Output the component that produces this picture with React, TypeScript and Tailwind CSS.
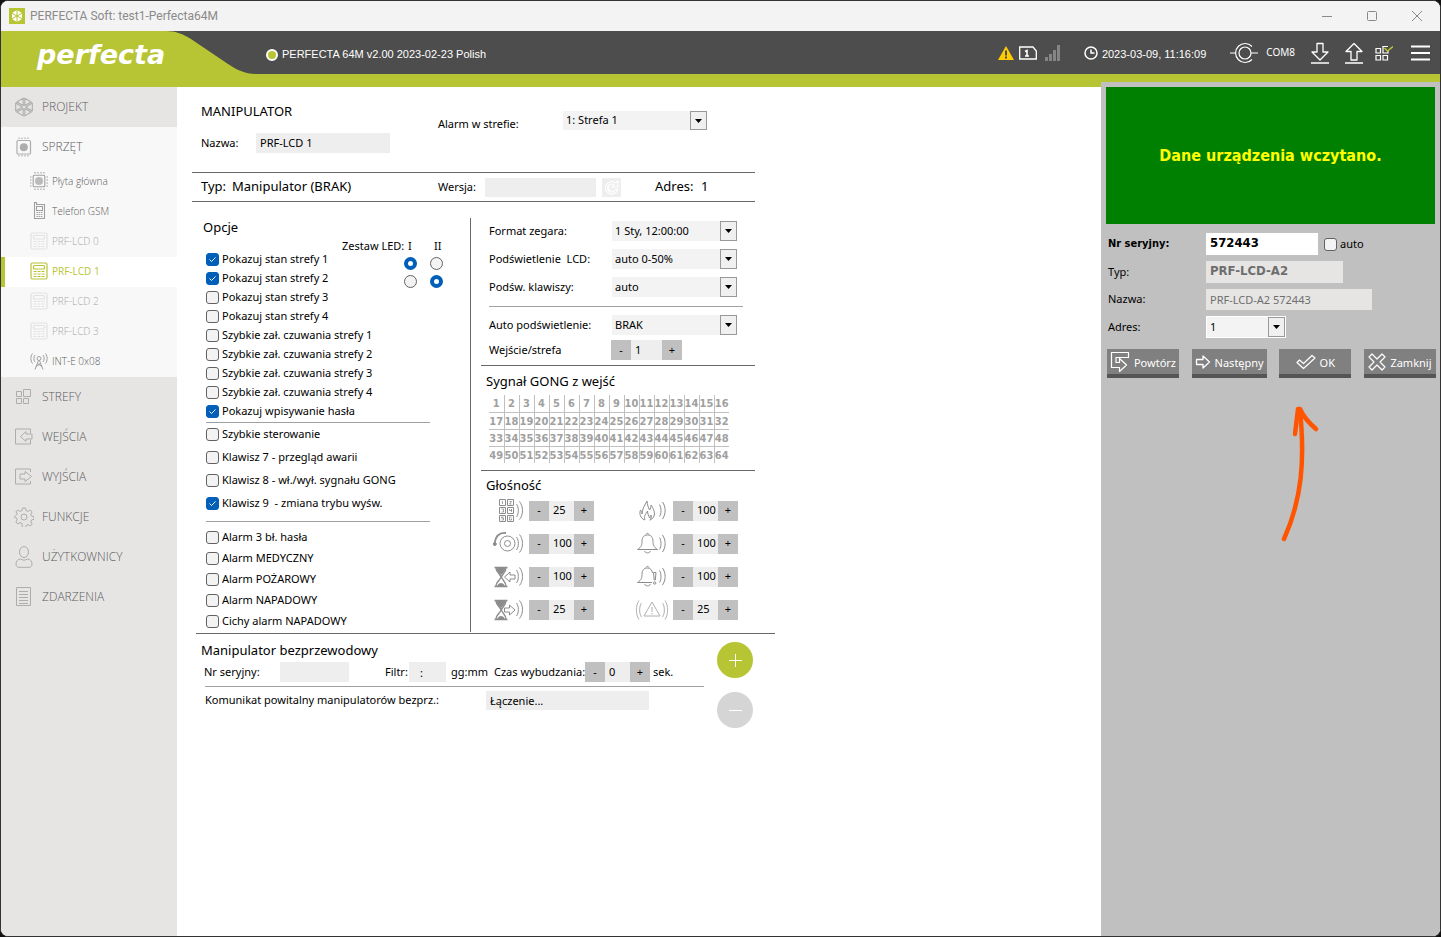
import type { ReactNode } from "react";
import clsx from "clsx";

const UI = "font-['Noto_Sans','Open_Sans',sans-serif]";
const BOLD = "font-['DejaVu_Sans_Condensed','DejaVu_Sans',sans-serif] font-bold";

/* ---------- icons ---------- */

function Svg({
  w,
  h,
  sw = 1,
  className,
  children,
}: {
  w: number;
  h: number;
  sw?: number;
  className?: string;
  children: ReactNode;
}) {
  return (
    <svg
      width={w}
      height={h}
      viewBox={`0 0 ${w} ${h}`}
      fill="none"
      stroke="currentColor"
      strokeWidth={sw}
      className={clsx("shrink-0", className)}
      aria-hidden="true"
    >
      {children}
    </svg>
  );
}

const HexIcon = () => (
  <Svg w={20} h={22} sw={1.1}>
    <path
      d="M10.800 9.500V2.100L17.200 6zM11.600 11l6.700-3.900v7.800zM10.800 12.500V19.900L17.200 16zM9.200 9.500V2.100L2.800 6zM8.400 11L1.700 7.100v7.800zM9.200 12.500V19.900L2.800 16z"
      strokeLinejoin="round"
    />
  </Svg>
);

const ChipIcon = () => (
  <Svg w={16} h={20} sw={1.2}>
    <rect x="1" y="3.5" width="13.5" height="13.5" rx="1" />
    <circle cx="7.8" cy="10.2" r="4" fill="currentColor" stroke="none" />
    <path d="M3 .5v1.5M6 .5v1.5M9 .5v1.5M12 .5v1.5M3 18v1.5M6 18v1.5M9 18v1.5M12 18v1.5" />
  </Svg>
);

const BoardIcon = () => (
  <Svg w={18} h={18} sw={1.1}>
    <rect x="3.2" y="3.2" width="11.6" height="11.6" rx="1" />
    <circle cx="9" cy="9" r="4" fill="currentColor" fillOpacity=".7" stroke="none" />
    <path d="M5 0v1.500M8 0v1.500M11 0v1.500M14 0v1.500M5 16.500v1.500M8 16.500v1.500M11 16.500v1.500M14 16.500v1.500M0 5h1.500M0 8h1.500M0 11h1.500M0 14h1.500M16.500 5h1.500M16.500 8h1.500M16.500 11h1.500M16.500 14h1.500" />
  </Svg>
);

const PhoneIcon = () => (
  <Svg w={18} h={18} sw={1.1}>
    <path d="M4.500.500v16h10V2.500h-8v-2z" />
    <path d="M6.500 4.500h6v4h-6z" />
    <path d="M6.500 10.500h6M6.500 12.500h6M6.500 14.500h6" strokeDasharray="1.500 .7" />
  </Svg>
);

const KeypadIcon = () => (
  <Svg w={18} h={18} sw={1.2}>
    <rect x="1" y="1" width="16" height="16" rx="1.500" />
    <rect x="3.500" y="3.500" width="11" height="3.500" rx="1" />
    <path d="M3.500 9.500h11M3.500 12h11M3.500 14.500h11" strokeDasharray="3 1" />
  </Svg>
);

const AntennaIcon = () => (
  <Svg w={20} h={18}>
    <circle cx="10" cy="6.500" r="2" />
    <path d="M9.500 8.500L6 17.500M10.500 8.500L14 17.500M8.500 11.500l4.500 3M11.500 11.500L7 14.500M6 10c-1.500-2-1.500-5 0-7M14 10c1.500-2 1.500-5 0-7M3.500 11.500c-2.200-3-2.200-7 0-10M16.500 11.500c2.200-3 2.200-7 0-10" />
  </Svg>
);

const ZonesIcon = () => (
  <Svg w={16} h={16}>
    <path d="M.500 2.500h5v5h-5zM7.500.500h7v7h-7zM.500 9.500h5v5h-5zM7.500 9.500h5v5h-5z" />
  </Svg>
);

const InputsIcon = () => (
  <Svg w={18} h={18}>
    <path d="M15.500 5V1H.500v15h15v-4" />
    <path d="M11 3.500L5.500 8.500l5.500 5V11h6V6h-6z" />
  </Svg>
);

const OutputsIcon = () => (
  <Svg w={18} h={18}>
    <path d="M15.500 4V1H.500v15h15v-3" />
    <path d="M10 3.500V6H5v5h5v2.500l6.500-5z" />
  </Svg>
);

const GearIcon = () => (
  <Svg w={20} h={20}>
    <circle cx="10" cy="10" r="3" />
    <path
      d="M8.500 1h3l.5 2.500 2 .9 2.200-1.400 2 2-1.400 2.200.8 1.900 2.400.5v2.800l-2.400.5-.8 2 1.400 2.100-2 2-2.200-1.400-2 .9-.5 2.500h-3L8 16.500l-2-.9L3.800 17l-2-2 1.400-2.100-.8-2L.5 10.400V9.600l1.900-1.500.8-1.900L1.800 5l2-2L6 4.400l2-.9z"
      strokeLinejoin="round"
    />
  </Svg>
);

const UserIcon = () => (
  <Svg w={18} h={22}>
    <ellipse cx="9" cy="6" rx="4.500" ry="5.500" />
    <path d="M5.500 13C2.500 13.500 1 15 1 18c0 2 1.200 3.300 3 3.300h10c1.800 0 3-1.300 3-3.300 0-3-1.500-4.500-4.500-5-2 1.500-5 1.500-7 0z" />
  </Svg>
);

const EventsIcon = () => (
  <Svg w={16} h={20}>
    <path d="M.500.500h14v18H.500zM3 4.500h9M3 7.500h9M3 10.500h9M3 13.500h9M3 16.500h9" />
  </Svg>
);

/* sound waves leaving the right side of each volume glyph */
const Waves = () => <path d="M24.500 6c2.500 3.500 2.500 9.500 0 13M27.500 3.500c4 5 4 13 0 18" />;

const VolKeypad = () => (
  <Svg w={32} h={26}>
    <path d="M7.500 1.500h6v6h-6zM15.500 1.500h6v6h-6zM7.500 9.500h6v6h-6zM15.500 9.500h6v6h-6zM7.500 17.500h6v6h-6zM15.500 17.500h6v6h-6z" />
    <path
      d="M10.500 3v3M17.500 3.500h2l-2 2.500h2M9.500 11h2v3h-2M17.500 11v1.500h2V11v3M11.500 19h-2v1h2v2h-2M19.500 19h-2v3h2v-1.500"
      strokeWidth=".8"
    />
    <Waves />
  </Svg>
);

const VolSiren = () => (
  <Svg w={32} h={26}>
    <circle cx="15.500" cy="12.500" r="7.500" />
    <circle cx="15.500" cy="12.500" r="3" />
    <path d="M2.500 12.500C3.500 5 8 1.500 14 2" strokeWidth="1.800" />
    <circle cx="2.800" cy="13" r="1.500" fill="currentColor" />
    <Waves />
  </Svg>
);

const Hourglass = () => (
  <>
    <path
      d="M2.500 3.500h13M2.500 22.500h13M4 4c0 4 5 7 5 9s-5 5-5 9M14 4c0 4-4.500 7-4.500 9s4.500 5 4.500 9"
      strokeWidth="1.300"
    />
    <path
      d="M4.500 4h9c0 3-3.500 6-4.500 7.500C8 10 4.500 7 4.500 4zM5 22c1-2 2.500-3 4-3s3 1 4 3z"
      fill="currentColor"
      stroke="none"
    />
  </>
);

const VolEntry = () => (
  <Svg w={32} h={26}>
    <Hourglass />
    <path d="M12.500 13l5.500-5v3h5v4h-5v3z" />
    <Waves />
  </Svg>
);

const VolExit = () => (
  <Svg w={32} h={26}>
    <Hourglass />
    <path d="M23 13l-5.500-5v3h-5v4h5v3z" />
    <Waves />
  </Svg>
);

const VolFire = () => (
  <Svg w={32} h={26}>
    <path d="M8.500 22c-4-2-5.500-6-4-10 1 1 1.500 2 1.500 4C6 11 9 7 11 3c.5 4 1 6 2.500 9 1-1 1.500-3 1.500-5 2 3 3.500 6 3.500 9-.5 3-2 5-4.500 6" />
    <path d="M9 22c-1.500-3 .5-6 2.500-9 0 3 1.500 5 2 7l1.500-3c1 2 0 4-1.500 5" />
    <path d="M23.500 6.500c2 3.500 2 9 0 12M26.500 4c3.500 5 3.500 12 0 17" />
  </Svg>
);

const VolBell = () => (
  <Svg w={32} h={26}>
    <path d="M1.500 18.500c4-2.500 4.500-5 4.500-8C6 6 8 4 11.500 4S17 6 17 10.500c0 3 .5 5.500 4.500 8zM10 3.500c.5-1.500 2.500-1.500 3 0M8.500 20c1 2.500 5 2.500 6 0" />
    <path d="M23.500 6.500c2 3.500 2 9 0 12M26.500 4c3.500 5 3.500 12 0 17" />
  </Svg>
);

const VolBellAlert = () => (
  <Svg w={32} h={26}>
    <path d="M16 18.500H1.500c4-2.500 4.500-5 4.500-8C6 6 8 4 11.500 4c3 0 4.500 2 5 5M10 3.500c.5-1.500 2.500-1.500 3 0M8.500 20c1 2.500 5 2.500 6 0" />
    <path d="M17.500 8.500h2.500l-.7 7.500h-1.100z" />
    <circle cx="18.700" cy="19" r="1.200" />
    <path d="M23.500 6.500c2 3.500 2 9 0 12M26.500 4c3.500 5 3.500 12 0 17" />
  </Svg>
);

const VolAlarm = () => (
  <Svg w={32} h={26} className="text-[#b0b0b0]">
    <path d="M16 5l8 14H8zM16 10v5M16 16v1.500" />
    <path d="M5.500 6c-2.500 3.500-2.500 10.500 0 14M3 3.500c-3.500 5-3.500 14 0 19M26.500 6c2.500 3.500 2.500 10.500 0 14M29 3.500c3.500 5 3.500 14 0 19" />
  </Svg>
);

/* ---------- form controls ---------- */

function Check({ label, on, className }: { label: string; on?: boolean; className?: string }) {
  return (
    <label className={clsx("flex items-center gap-[3px] whitespace-pre text-[11px]", className)}>
      <span className="grid size-[13px] shrink-0">
        <input
          type="checkbox"
          defaultChecked={on}
          className="peer col-start-1 row-start-1 size-[13px] appearance-none rounded-[3px] border border-[#626262] bg-[#f3f3f3] checked:border-[#005fb8] checked:bg-[#005fb8]"
        />
        <svg
          viewBox="0 0 13 13"
          className="pointer-events-none invisible col-start-1 row-start-1 size-[13px] peer-checked:visible"
          fill="none"
          stroke="#fff"
        >
          <path d="M3.500 6.500l2 2 4-4" />
        </svg>
      </span>
      {label}
    </label>
  );
}

function Radio({ name, label, on }: { name: string; label: string; on?: boolean }) {
  return (
    <input
      type="radio"
      name={name}
      aria-label={label}
      defaultChecked={on}
      className="size-[13px] appearance-none rounded-full border border-[#626262] bg-[#f3f3f3] checked:border-4 checked:border-[#005fb8] checked:bg-white"
    />
  );
}

function Dropdown({ id, value, className }: { id: string; value: string; className?: string }) {
  return (
    <div className={clsx("relative bg-[#f3f3f3]", className)}>
      <select id={id} className="block h-full w-full appearance-none bg-transparent pl-[3px] text-[11px] outline-none">
        <option>{value}</option>
      </select>
      <span className="pointer-events-none absolute inset-y-0 right-0 flex w-[17px] items-center justify-center border border-[#999] bg-[#f0f0f0]">
        <svg width="7" height="4" viewBox="0 0 7 4">
          <path d="M0 0h7L3.500 4z" />
        </svg>
      </span>
    </div>
  );
}

function Stepper({ label, value, wide }: { label: string; value: string; wide?: boolean }) {
  return (
    <div className="flex h-5 text-[11px]">
      <button type="button" className="w-5 bg-[#c0c0c0]">
        -
      </button>
      <input
        aria-label={label}
        defaultValue={value}
        className={clsx("bg-[#eee] outline-none", wide ? "w-[31px] pl-1" : "w-[25px] pl-1")}
      />
      <button type="button" className="w-5 bg-[#c0c0c0]">
        +
      </button>
    </div>
  );
}

/* ---------- window chrome ---------- */

function TitleBar() {
  return (
    <div className="flex h-[30px] items-center bg-[#f3f3f3] pl-2 font-['Roboto','Noto_Sans',sans-serif] text-xs text-[#8a8a8a]">
      <svg width="16" height="16" viewBox="0 0 16 16" fill="none" stroke="#b7c433">
        <rect width="16" height="16" fill="#b7c433" stroke="none" />
        <path d="M8 2l5 3v6l-5 3-5-3V5z" fill="#fff" stroke="none" />
        <path d="M8 1.500v13M2.500 5l11 6M13.500 5l-11 6" />
      </svg>
      <span className="ml-[5px] flex-1">PERFECTA Soft: test1-Perfecta64M</span>
      <button type="button" aria-label="Minimize" className="flex w-[45px] justify-center">
        <Svg w={10} h={10}>
          <path d="M0 5.500h10" />
        </Svg>
      </button>
      <button type="button" aria-label="Maximize" className="flex w-[45px] justify-center">
        <Svg w={10} h={10}>
          <rect x=".5" y=".5" width="9" height="9" rx="1" />
        </Svg>
      </button>
      <button type="button" aria-label="Close" className="flex w-[46px] justify-center">
        <Svg w={10} h={10}>
          <path d="M0 0l10 10M10 0L0 10" />
        </Svg>
      </button>
    </div>
  );
}

function Header() {
  return (
    <header className="flex h-14 border-b-[13px] border-[#b7c433] bg-[#4d4d4d] font-['Liberation_Sans',Arial,sans-serif] text-[11px] text-white">
      <div className="grid w-[265px] shrink-0">
        <svg width="264" height="43" viewBox="0 0 264 43" className="col-start-1 row-start-1" fill="#b7c433">
          <path d="M0 0h165c10 0 17 3 25 8l37 25c9 6 17 10 29 10H0z" />
        </svg>
        <span className="col-start-1 row-start-1 pl-9 pt-2 font-['DejaVu_Sans',sans-serif] text-[27px] leading-8 font-bold italic">
          perfecta
        </span>
      </div>
      <div className="flex flex-1 items-center pt-1">
        <svg width="12" height="12" viewBox="0 0 12 12">
          <circle cx="6" cy="6" r="5" fill="#b7c433" stroke="#fff" strokeWidth="2" />
        </svg>
        <span className="ml-1">PERFECTA 64M v2.00 2023-02-23 Polish</span>
      </div>
      <div className="flex items-center">
        <svg width="16" height="14" viewBox="0 0 16 14">
          <path d="M8 0l8 14H0z" fill="#fc0" />
          <path d="M8 4.500v5M8 10.500v2" stroke="#4d4d4d" strokeWidth="2" />
        </svg>
        <svg width="18" height="14" viewBox="0 0 18 14" className="ml-[5px]" fill="none" stroke="#fff" strokeWidth="1.300">
          <path d="M.700 1h13.300l3.300 4v8H.700z" />
          <path d="M6 5.500l2-1v5.500M6 10h4" strokeWidth="1.600" />
        </svg>
        <svg width="16" height="16" viewBox="0 0 16 16" className="ml-2" fill="#858585">
          <path d="M0 12h3v4H0zM4 9h3v7H4zM8 5h3v11H8zM12 0h3v16h-3z" />
        </svg>
        <svg width="14" height="14" viewBox="0 0 14 14" className="ml-[23px]" fill="none" stroke="#fff" strokeWidth="1.500">
          <circle cx="7" cy="7" r="6" />
          <path d="M7 3.500V7h3.500" />
        </svg>
        <span className="ml-1 pt-1">2023-03-09, 11:16:09</span>
        <svg width="28" height="22" viewBox="0 0 28 22" className="ml-6" fill="none" stroke="#fff" strokeWidth="1.200">
          <circle cx="15" cy="11" r="6" />
          <path d="M0 11h5.500M21 11h7M22 4.500a9.500 9.500 0 1 0 0 13" />
        </svg>
        <span className={clsx("ml-2 text-[10px]", UI)}>COM8</span>
        <button type="button" aria-label="Download" className="ml-4">
          <Svg w={18} h={22} sw={1.3}>
            <path d="M6 1.500h6V10h5L9 18 1 10h5zM0 21h18" strokeLinejoin="round" />
          </Svg>
        </button>
        <button type="button" aria-label="Upload" className="ml-4">
          <Svg w={18} h={22} sw={1.3}>
            <path d="M6 18h6V9.500h5L9 1.500 1 9.500h5zM0 21h18" strokeLinejoin="round" />
          </Svg>
        </button>
        <button type="button" aria-label="Status" className="ml-3">
          <Svg w={18} h={16} sw={1.2}>
            <path d="M1 3.500h4.500V8H1zM1 10.500h4.500V15H1zM8 10.500h4.500V15H8zM13 1.500H8V8h5V6" />
            <path d="M9.500 3l3 3L18 1.500" stroke="#b7c433" strokeWidth="1.600" />
          </Svg>
        </button>
        <button type="button" aria-label="Menu" className="ml-[18px] mr-[10px]">
          <Svg w={19} h={16} sw={2}>
            <path d="M0 1.500h19M0 8h19M0 14.500h19" />
          </Svg>
        </button>
      </div>
    </header>
  );
}

/* ---------- sidebar ---------- */

const devices = [
  { label: "Płyta główna", icon: <BoardIcon />, state: "on" },
  { label: "Telefon GSM", icon: <PhoneIcon />, state: "on" },
  { label: "PRF-LCD 0", icon: <KeypadIcon />, state: "off" },
  { label: "PRF-LCD 1", icon: <KeypadIcon />, state: "active" },
  { label: "PRF-LCD 2", icon: <KeypadIcon />, state: "off" },
  { label: "PRF-LCD 3", icon: <KeypadIcon />, state: "off" },
  { label: "INT-E 0x08", icon: <AntennaIcon />, state: "on" },
];

const sections = [
  { label: "STREFY", icon: <ZonesIcon /> },
  { label: "WEJŚCIA", icon: <InputsIcon /> },
  { label: "WYJŚCIA", icon: <OutputsIcon /> },
  { label: "FUNKCJE", icon: <GearIcon /> },
  { label: "UŻYTKOWNICY", icon: <UserIcon /> },
  { label: "ZDARZENIA", icon: <EventsIcon /> },
];

function NavItem({ label, icon, light }: { label: string; icon: ReactNode; light?: boolean }) {
  return (
    <a href="#" className={clsx("flex h-10 items-center pl-[13px] text-xs", light && "bg-[#f8f8f8]")}>
      <span className="flex w-5 justify-center text-[#adadad]">{icon}</span>
      <span className="ml-2">{label}</span>
    </a>
  );
}

function Sidebar() {
  return (
    <nav className="w-44 shrink-0 bg-[#e6e5e4] font-['Open_Sans','Noto_Sans',sans-serif] font-light text-[#5c5c5c]">
      <NavItem label="PROJEKT" icon={<HexIcon />} />
      <NavItem label="SPRZĘT" icon={<ChipIcon />} light />
      {devices.map((d) => (
        <a
          key={d.label}
          href="#"
          className={clsx(
            "flex h-[30px] items-center border-l-4 pb-0.5 pl-6 text-[10px]",
            d.state === "active" && "border-[#b7c433] bg-white font-normal text-[#b7c433]",
            d.state === "off" && "border-[#f8f8f8] bg-[#f8f8f8] text-[#a8a8a8]",
            d.state === "on" && "border-[#f8f8f8] bg-[#f8f8f8]"
          )}
        >
          <span
            className={clsx(
              "flex w-5 justify-center",
              d.state === "off" && "text-[#e2e2e2]",
              d.state === "on" && "text-[#9f9f9f]"
            )}
          >
            {d.icon}
          </span>
          <span className="ml-[3px]">{d.label}</span>
        </a>
      ))}
      {sections.map((s) => (
        <NavItem key={s.label} {...s} />
      ))}
    </nav>
  );
}

/* ---------- keypad form ---------- */

const zoneOptions = [
  "Pokazuj stan strefy 1",
  "Pokazuj stan strefy 2",
  "Pokazuj stan strefy 3",
  "Pokazuj stan strefy 4",
  "Szybkie zał. czuwania strefy 1",
  "Szybkie zał. czuwania strefy 2",
  "Szybkie zał. czuwania strefy 3",
  "Szybkie zał. czuwania strefy 4",
  "Pokazuj wpisywanie hasła",
];

const keyOptions = [
  "Szybkie sterowanie",
  "Klawisz 7 - przegląd awarii",
  "Klawisz 8 - wł./wył. sygnału GONG",
  "Klawisz 9  - zmiana trybu wyśw.",
];

const alarmOptions = ["Alarm 3 bł. hasła", "Alarm MEDYCZNY", "Alarm POŻAROWY", "Alarm NAPADOWY", "Cichy alarm NAPADOWY"];

const checked = ["Pokazuj stan strefy 1", "Pokazuj stan strefy 2", "Pokazuj wpisywanie hasła", "Klawisz 9  - zmiana trybu wyśw."];

const volumes = [
  { name: "Klawiatura", icon: <VolKeypad />, value: "25" },
  { name: "Pożar", icon: <VolFire />, value: "100" },
  { name: "Gong", icon: <VolSiren />, value: "100" },
  { name: "Alarm", icon: <VolBell />, value: "100" },
  { name: "Czas na wejście", icon: <VolEntry />, value: "100" },
  { name: "Alarm ostrzegawczy", icon: <VolBellAlert />, value: "100" },
  { name: "Czas na wyjście", icon: <VolExit />, value: "25" },
  { name: "Awaria", icon: <VolAlarm />, value: "25" },
];

function Options() {
  return (
    <div className="w-[279px] shrink-0 border-r border-[#696969] pl-[14px]">
      <h2 className="-ml-[3px] h-5 text-[13px] leading-[18px]">Opcje</h2>
      <div className="flex h-4 items-center pl-[136px] text-[11px]">
        <span className="w-[65px]">Zestaw LED:</span>
        <span className="w-[26px] pl-px">I</span>
        <span className="pl-px">II</span>
      </div>
      <div className="flex">
        <div className="-mt-1 w-[198px]">
          {zoneOptions.map((o) => (
            <Check key={o} label={o} on={checked.includes(o)} className="h-[19px]" />
          ))}
        </div>
        <div>
          <div className="flex h-[18px] items-center gap-[13px]">
            <Radio name="led1" label="Strefa 1, zestaw I" on />
            <Radio name="led1" label="Strefa 1, zestaw II" />
          </div>
          <div className="flex h-[18px] items-center gap-[13px]">
            <Radio name="led2" label="Strefa 2, zestaw I" />
            <Radio name="led2" label="Strefa 2, zestaw II" on />
          </div>
        </div>
      </div>
      <div className="mr-10 mt-px border-t border-[#a0a0a0]">
        {keyOptions.map((o) => (
          <Check key={o} label={o} on={checked.includes(o)} className="h-[23px]" />
        ))}
      </div>
      <div className="mr-10 mt-[6px] border-t border-[#a0a0a0] pt-[5px]">
        {alarmOptions.map((o) => (
          <Check key={o} label={o} className="h-[21px]" />
        ))}
      </div>
    </div>
  );
}

function Row({ id, label, value }: { id: string; label: string; value: string }) {
  return (
    <div className="flex h-7 items-center">
      <label htmlFor={id} className="w-[123px] whitespace-pre">
        {label}
      </label>
      <Dropdown id={id} value={value} className="h-5 w-[125px]" />
    </div>
  );
}

function Settings() {
  return (
    <div className="flex-1 pl-[10px] text-[11px]">
      <div className="-mt-px pl-2">
        <Row id="clock" label="Format zegara:" value="1 Sty, 12:00:00" />
        <Row id="lcd" label="Podświetlenie  LCD:" value="auto 0-50%" />
        <Row id="keys" label="Podśw. klawiszy:" value="auto" />
        <div className="mr-3 mt-[5px] border-t border-[#a0a0a0] pt-1">
          <Row id="backlight" label="Auto podświetlenie:" value="BRAK" />
          <div className="flex h-[26px] items-center pb-1">
            <span className="w-[122px]">Wejście/strefa</span>
            <Stepper label="Wejście/strefa" value="1" wide />
          </div>
        </div>
      </div>
      <div className="border-t border-[#696969] pl-[5px] pt-[3px]">
        <h2 className="text-[13px] leading-6">Sygnał GONG z wejść</h2>
        <table className={clsx("ml-[3px] mt-[2px] table-fixed border-collapse text-[11px] text-[#a0a0a0]", BOLD)}>
          <tbody>
            {[0, 1, 2, 3].map((r) => (
              <tr key={r} className="border-b border-[#c0c0c0] last:border-0">
                {Array.from({ length: 16 }, (_, c) => (
                  <td
                    key={c}
                    className="h-[17px] w-[15px] min-w-[15px] max-w-[15px] border-r border-[#c0c0c0] p-0 pt-[2px] text-center leading-[14px] whitespace-nowrap last:border-0"
                  >
                    {r * 16 + c + 1}
                  </td>
                ))}
              </tr>
            ))}
          </tbody>
        </table>
      </div>
      <div className="mt-[7px] border-t border-[#696969] pl-[5px] pt-1">
        <h2 className="text-[13px] leading-5">Głośność</h2>
        <div className="-mt-px grid grid-cols-[144px_auto] justify-start pl-[6px]">
          {volumes.map((v) => (
            <div key={v.name} className="flex h-[33px] items-center gap-[5px] text-[#8c8c8c]">
              {v.icon}
              <div className="text-black">
                <Stepper label={v.name} value={v.value} />
              </div>
            </div>
          ))}
        </div>
      </div>
    </div>
  );
}

function Wireless() {
  return (
    <div className="ml-1 flex max-w-[579px] border-t border-[#696969] pl-[5px] pt-1 text-[11px]">
      <div className="w-[503px] whitespace-nowrap">
        <h2 className="text-[13px] leading-6">Manipulator bezprzewodowy</h2>
        <div className="flex h-5 items-center pl-[3px]">
          <label htmlFor="wserial" className="w-[76px]">
            Nr seryjny:
          </label>
          <input id="wserial" className="h-5 w-[69px] bg-[#eee]" />
          <label htmlFor="filter" className="ml-9 w-6">
            Filtr:
          </label>
          <input id="filter" defaultValue=":" className="h-5 w-[37px] bg-[#eee] pl-[11px]" />
          <span className="ml-[5px] w-[43px]">gg:mm</span>
          <span className="w-[91px]">Czas wybudzania:</span>
          <Stepper label="Czas wybudzania" value="0" />
          <span className="ml-[3px]">sek.</span>
        </div>
        <div className="ml-1 mt-1 flex items-center border-t border-[#a0a0a0] pt-1">
          <label htmlFor="welcome" className="w-[281px]">
            Komunikat powitalny manipulatorów bezprz.:
          </label>
          <input id="welcome" defaultValue="Łączenie..." className="h-[19px] w-[163px] bg-[#eee] pl-1" />
        </div>
      </div>
      <div className="ml-[13px] flex flex-col gap-[14px] pt-1 text-white">
        <button type="button" aria-label="Dodaj" className="flex size-9 items-center justify-center rounded-full bg-[#b7c433]">
          <Svg w={15} h={15}>
            <path d="M7.500 1v13M1 7.500h13" />
          </Svg>
        </button>
        <button type="button" aria-label="Usuń" className="flex size-9 items-center justify-center rounded-full bg-[#d5d5d5]">
          <Svg w={15} h={15}>
            <path d="M1 7.500h13" />
          </Svg>
        </button>
      </div>
    </div>
  );
}

function KeypadForm() {
  return (
    <main className="min-w-0 flex-1 bg-white pl-[15px]">
      <div className="max-w-[563px]">
        <div className="flex h-[86px] border-b border-[#696969] pl-[9px] text-[11px]">
          <div className="w-[237px] pt-3">
            <h1 className="text-[13px] leading-6">MANIPULATOR</h1>
            <div className="mt-[10px] flex items-center">
              <label htmlFor="name" className="w-[55px]">
                Nazwa:
              </label>
              <input id="name" defaultValue="PRF-LCD 1" className="h-5 w-[134px] bg-[#eee] pb-[2px] pl-1" />
            </div>
          </div>
          <div className="flex items-center self-start pt-6">
            <label htmlFor="zone" className="w-[125px]">
              Alarm w strefie:
            </label>
            <Dropdown id="zone" value="1: Strefa 1" className="mb-2 h-[19px] w-36" />
          </div>
        </div>
        <div className="flex h-[29px] items-center border-b border-[#696969] pl-[9px] text-[11px]">
          <span className="w-[31px] text-[13px]">Typ:</span>
          <span className="w-[206px] text-[13px]">Manipulator (BRAK)</span>
          <label htmlFor="version" className="w-[47px]">
            Wersja:
          </label>
          <input id="version" className="h-[19px] w-[111px] bg-[#eee]" />
          <button
            type="button"
            aria-label="Odczytaj wersję"
            className="ml-[6px] flex size-[19px] items-center justify-center bg-[#eee] text-white"
          >
            <Svg w={15} h={15} sw={1.1}>
              <path
                d="M11.500 2.800A6.300 6.300 0 1 0 13.800 9.500h-2.600A4 4 0 1 1 9.800 4.800L7.800 7H14V1zM5.500 6.500a2 2 0 1 0 2.500 3"
                strokeLinejoin="round"
              />
            </Svg>
          </button>
          <span className="ml-[34px] w-[46px] text-[13px]">Adres:</span>
          <span className="text-[13px]">1</span>
        </div>
        <div className="flex pt-4 pb-px">
          <Options />
          <Settings />
        </div>
      </div>
      <Wireless />
    </main>
  );
}

/* ---------- device panel ---------- */

function PanelButton({ label, icon, wide }: { label: string; icon: ReactNode; wide?: boolean }) {
  return (
    <button
      type="button"
      className={clsx(
        "flex h-[29px] items-center justify-center gap-1 border-b-4 border-[#555] bg-[#808080] text-[11px] text-white",
        wide ? "w-[75px]" : "w-[72px]"
      )}
    >
      {icon}
      <span className="pt-1">{label}</span>
    </button>
  );
}

function DevicePanel() {
  return (
    <aside className="z-10 -mt-[5px] w-[339px] shrink-0 bg-[#c0c0c0] px-[5px] pt-[5px] text-[11px]">
      <div className={clsx("flex h-[137px] items-center justify-center bg-[#008000] text-base text-[#ff0]", BOLD)}>
        Dane urządzenia wczytano.
      </div>
      <div className="grid grid-cols-[98px_1fr] items-center gap-y-[6px] pl-[2px] pt-[9px]">
        <label htmlFor="serial" className={BOLD}>
          Nr seryjny:
        </label>
        <div className="flex items-center">
          <input id="serial" defaultValue="572443" className={clsx("h-[22px] w-28 bg-white pb-[3px] pl-1 text-[13px]", BOLD)} />
          <Check label="auto" className="ml-[6px]" />
        </div>
        <label htmlFor="type">Typ:</label>
        <input
          id="type"
          readOnly
          defaultValue="PRF-LCD-A2"
          className={clsx("h-[22px] w-[137px] bg-[#e6e5e4] pb-[3px] pl-1 text-[13px] text-[#6e6e6e]", BOLD)}
        />
        <label htmlFor="devname">Nazwa:</label>
        <input
          id="devname"
          readOnly
          defaultValue="PRF-LCD-A2 572443"
          className="h-[21px] w-[166px] bg-[#e6e5e4] pl-1 text-[#6e6e6e]"
        />
        <label htmlFor="address">Adres:</label>
        <Dropdown id="address" value="1" className="h-[22px] w-20 border border-white bg-[#e6e5e4]" />
      </div>
      <div className="-mr-px ml-px mt-[11px] flex justify-between">
        <PanelButton
          label="Powtórz"
          icon={
            <Svg w={20} h={22} sw={1.2}>
              <path d="M18.500 1.500H1.500v15h8V20.500l7-6.500-7-6.500v4H6V6.500h12.500z" strokeLinejoin="round" />
            </Svg>
          }
        />
        <PanelButton
          wide
          label="Następny"
          icon={
            <Svg w={16} h={14} sw={1.3}>
              <path d="M1.500 4.500H8V1l6.500 6L8 13V9.500H1.500z" strokeLinejoin="round" />
            </Svg>
          }
        />
        <PanelButton
          label="OK"
          icon={
            <Svg w={20} h={16} sw={1.2}>
              <path d="M1 8.500l2.500-2.500L7.500 9.500 16 1.500 19 4 7.500 14.500z" strokeLinejoin="round" />
            </Svg>
          }
        />
        <PanelButton
          label="Zamknij"
          icon={
            <Svg w={18} h={18} sw={1.2}>
              <path d="M4 1L9 6l5-5 3 3-5 5 5 5-3 3-5-5-5 5-3-3 5-5-5-5z" strokeLinejoin="round" />
            </Svg>
          }
        />
      </div>
      <svg
        width="44"
        height="144"
        viewBox="0 0 44 144"
        className="ml-[174px] mt-6 text-[#ff5500]"
        fill="none"
        stroke="currentColor"
        strokeWidth="4.500"
        strokeLinecap="round"
        strokeLinejoin="round"
      >
        <path d="M4 137C22 97 25 58 20 8" />
        <path d="M15 32L18 7l2 0c4 9 9 14 16 20" />
      </svg>
    </aside>
  );
}

export default function App() {
  return (
    <div className="min-h-screen bg-[#111]">
      <div className={clsx("flex min-h-screen flex-col overflow-hidden rounded-lg border border-[#333] bg-white text-black", UI)}>
        <TitleBar />
        <Header />
        <div className="flex flex-1">
          <Sidebar />
          <KeypadForm />
          <DevicePanel />
        </div>
      </div>
    </div>
  );
}
